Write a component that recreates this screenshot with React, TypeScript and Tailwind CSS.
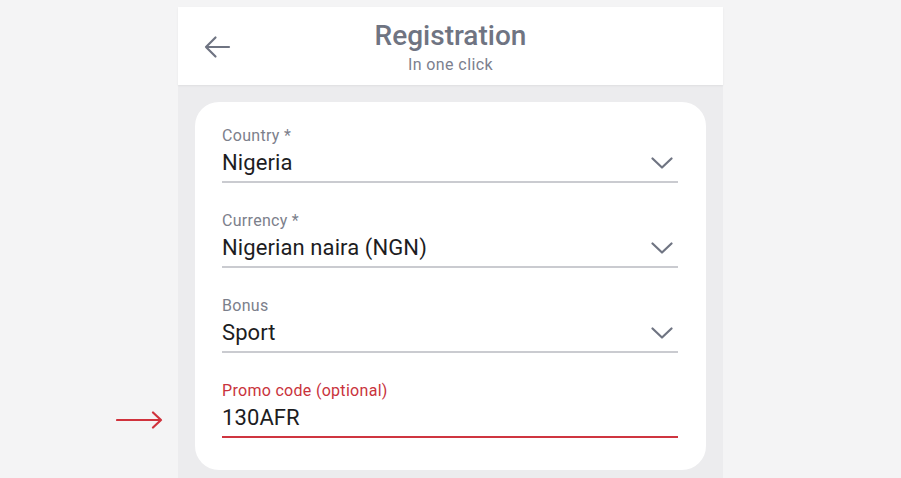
// ── Field ─────────────────────────────────────────────────────────────────────

function Field({ label, value, select, active }: { label: string; value: string; select?: boolean; active?: boolean }) {
  return (
    <div>
      <p className={`text-[16px] leading-[19px] tracking-[0.3px] ${active ? 'text-[#c9333c]' : 'text-[#7c808b]'}`}>{label}</p>
      <div className="mt-[5px] flex h-[26px] items-center justify-between">
        <span className="text-[22px] leading-[26px] tracking-[0.1px] text-[#1d1d1f]">{value}</span>
        {select && (
          <svg width="22" height="12" viewBox="0 0 22 12" className="mr-[5px]">
            <path d="M1.5 1.5 L11 10.5 L20.5 1.5" fill="none" stroke="#6f7482" strokeWidth="2.2" strokeLinecap="round" strokeLinejoin="round" />
          </svg>
        )}
      </div>
      <div className={`mt-[5px] h-[2px] ${active ? 'bg-[#cf3540]' : 'bg-[#cacbd0]'}`} />
    </div>
  )
}

// ── Page ──────────────────────────────────────────────────────────────────────

export default function App() {
  return (
    <div className="h-[478px] overflow-hidden bg-[#f4f4f5] font-['Roboto',sans-serif]">
      <div className="relative mx-auto mt-[7px] h-[471px] w-[545px] bg-[#ececee]">

        {/* Header */}
        <header className="relative flex h-[78px] flex-col items-center bg-white shadow-[0_1px_2px_rgba(0,0,0,0.06)]">
          <button className="absolute left-[25px] top-[28px] text-[#6f7482]">
            <svg width="28" height="24" viewBox="0 0 28 24">
              <path d="M26 12 H3 M12.5 2.5 L3 12 L12.5 21.5" fill="none" stroke="currentColor" strokeWidth="2.2" strokeLinecap="round" strokeLinejoin="round" />
            </svg>
          </button>
          <h1 className="mt-[12px] text-[28px] font-medium leading-[33px] text-[#6f7482]">Registration</h1>
          <p className="mt-[3px] text-[16px] leading-[20px] tracking-[0.4px] text-[#7c808e]">In one click</p>
        </header>

        {/* Form card */}
        <div className="p-[17px]">
          <div className="flex flex-col gap-[28px] rounded-[24px] bg-white pb-[32px] pl-[27px] pr-[28px] pt-[24px]">
            <Field label="Country *" value="Nigeria" select />
            <Field label="Currency *" value="Nigerian naira (NGN)" select />
            <Field label="Bonus" value="Sport" select />
            <Field label="Promo code (optional)" value="130AFR" active />
          </div>
        </div>

        {/* Annotation arrow */}
        <svg className="absolute left-[-62px] top-[404px]" width="48" height="18" viewBox="0 0 48 18">
          <path d="M1 9 H45 M37 1.5 L45 9 L37 16.5" fill="none" stroke="#d0323c" strokeWidth="2.2" strokeLinecap="round" strokeLinejoin="round" />
        </svg>
      </div>
    </div>
  )
}
